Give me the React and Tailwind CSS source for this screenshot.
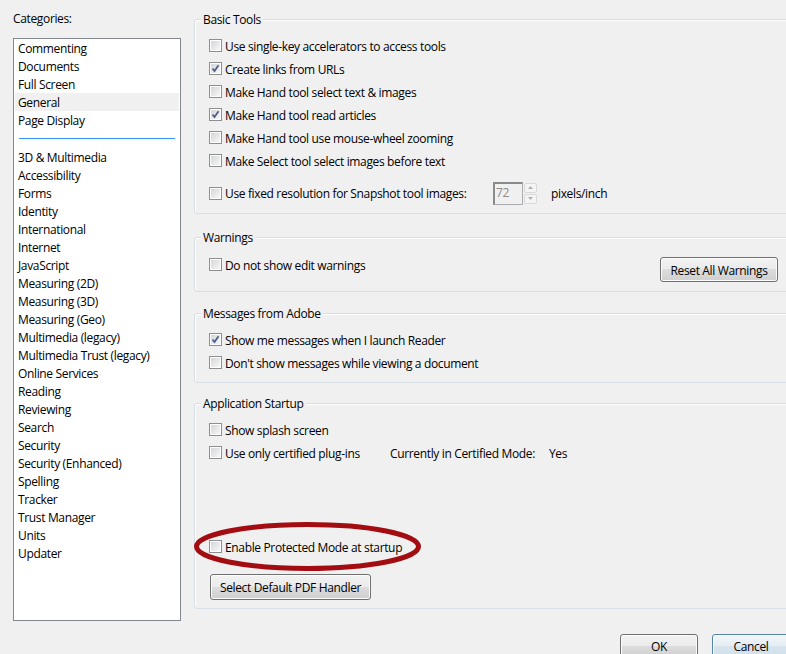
import React from "react";

const categoriesTop = ["Commenting", "Documents", "Full Screen", "General", "Page Display"];
const categoriesBottom = [
  "3D & Multimedia",
  "Accessibility",
  "Forms",
  "Identity",
  "International",
  "Internet",
  "JavaScript",
  "Measuring (2D)",
  "Measuring (3D)",
  "Measuring (Geo)",
  "Multimedia (legacy)",
  "Multimedia Trust (legacy)",
  "Online Services",
  "Reading",
  "Reviewing",
  "Search",
  "Security",
  "Security (Enhanced)",
  "Spelling",
  "Tracker",
  "Trust Manager",
  "Units",
  "Updater",
];

const Checkbox = ({ checked }) => (
  <div className="w-[13px] h-[13px] shrink-0 border border-[#8e8f8f] bg-white p-[1px] relative">
    <div className="w-full h-full bg-gradient-to-br from-[#d4d6d9] to-[#f7f7f7]" />
    {checked && (
      <svg className="absolute left-0 top-0" width="11" height="11" viewBox="0 0 11 11">
        <path d="M2.5 5.5 L4.5 8 L8.5 2.2" fill="none" stroke="#4a5b8c" strokeWidth="1.7" />
      </svg>
    )}
  </div>
);

const Row = ({ checked, children }) => (
  <div className="flex items-center h-[23px]">
    <Checkbox checked={checked} />
    <span className="ml-[3px] whitespace-nowrap relative top-[1px]">{children}</span>
  </div>
);

const Group = ({ title, className, children }) => (
  <div className={"relative border border-[#d5dfe5] rounded-[3px] shadow-[inset_1px_1px_0_#fff] " + className}>
    <span className="absolute left-[6px] top-[-8px] px-[2px] bg-[#f0f0f0] leading-[16px]">{title}</span>
    {children}
  </div>
);

const Button = ({ children, className }) => (
  <div
    className={
      "flex items-center justify-center rounded-[3px] border border-[#707070] bg-[linear-gradient(#f2f2f2_0%,#ebebeb_49%,#dddddd_50%,#cfcfcf_100%)] shadow-[inset_0_0_0_1px_#fcfcfc] " +
      className
    }
  >
    <span className="relative top-[1px]">{children}</span>
  </div>
);

export default function App() {
  return (
    <div
      className="relative w-[786px] h-[654px] overflow-hidden bg-[#f0f0f0] text-[12px] text-black flex"
      style={{ fontFamily: '"Open Sans", "Noto Sans", sans-serif', letterSpacing: "-0.35px" }}
    >
      {/* left: categories */}
      <div className="ml-[13px] w-[168px] shrink-0">
        <div className="pt-[11px] leading-[16px]">Categories:</div>
        <div className="mt-[11px] h-[583px] border border-[#828790] bg-white">
          {categoriesTop.map((c) => (
            <div
              key={c}
              className={"mx-[1px] h-[18px] leading-[18px] pl-[3px] " + (c === "General" ? "bg-[#f0f0f0]" : "")}
            >
              <span className="relative top-[1px]">{c}</span>
            </div>
          ))}
          <div className="h-[19px] pt-[9px]">
            <div className="mx-[5px] h-px bg-[#3399ff]" />
          </div>
          {categoriesBottom.map((c) => (
            <div key={c} className="mx-[1px] h-[18px] leading-[18px] pl-[3px]">
              <span className="relative top-[1px]">{c}</span>
            </div>
          ))}
        </div>
      </div>

      {/* right: preferences */}
      <div className="ml-[13px] w-[596px] shrink-0 pt-[19px]">
        <Group title="Basic Tools" className="h-[195px] pt-[14px] pl-[14px]">
          <Row>Use single-key accelerators to access tools</Row>
          <Row checked>Create links from URLs</Row>
          <Row>Make Hand tool select text &amp; images</Row>
          <Row checked>Make Hand tool read articles</Row>
          <Row>Make Hand tool use mouse-wheel zooming</Row>
          <Row>Make Select tool select images before text</Row>
          <div className="flex items-center h-[24px] mt-[9px]">
            <Checkbox />
            <span className="ml-[3px] w-[268px] whitespace-nowrap relative top-[1px]">
              Use fixed resolution for Snapshot tool images:
            </span>
            <div className="w-[30px] h-[23px] border border-[#abadb3] border-t-[#8a8a8a] border-l-[#8a8a8a] border-l-2 border-t-2 bg-[#f0f0f0] text-[#8a8a8a] pl-[1px] leading-[18px]">
              72
            </div>
            <div className="w-[15px] h-[23px] flex flex-col gap-[1px] p-[1px]">
              <div className="flex-1 border border-[#d9d9d9] rounded-[2px] bg-[#f4f4f4] flex items-center justify-center">
                <svg width="5" height="3" viewBox="0 0 5 3"><path d="M0 3 L2.5 0 L5 3Z" fill="#b0b0b0" /></svg>
              </div>
              <div className="flex-1 border border-[#d9d9d9] rounded-[2px] bg-[#f4f4f4] flex items-center justify-center">
                <svg width="5" height="3" viewBox="0 0 5 3"><path d="M0 0 L2.5 3 L5 0Z" fill="#b0b0b0" /></svg>
              </div>
            </div>
            <span className="ml-[13px] relative top-[1px]">pixels/inch</span>
          </div>
        </Group>

        <Group title="Warnings" className="mt-[23px] h-[55px] pt-[15px] pl-[14px] pr-[11px] flex items-start justify-between">
          <Row>Do not show edit warnings</Row>
          <Button className="mt-[4px] w-[118px] h-[25px]">Reset All Warnings</Button>
        </Group>

        <Group title="Messages from Adobe" className="mt-[21px] h-[70px] pt-[14px] pl-[14px]">
          <Row checked>Show me messages when I launch Reader</Row>
          <Row>Don&apos;t show messages while viewing a document</Row>
        </Group>

        <Group title="Application Startup" className="mt-[20px] h-[206px] pt-[14px] pl-[14px]">
          <Row>Show splash screen</Row>
          <div className="flex items-center h-[23px]">
            <Checkbox />
            <span className="ml-[3px] w-[165px] whitespace-nowrap relative top-[1px]">Use only certified plug-ins</span>
            <span className="w-[159px] whitespace-nowrap relative top-[1px]">Currently in Certified Mode:</span>
            <span className="relative top-[1px]">Yes</span>
          </div>
          <div className="mt-[71px]">
            <Row>Enable Protected Mode at startup</Row>
          </div>
          <Button className="mt-[16px] ml-[1px] w-[161px] h-[26px]">Select Default PDF Handler</Button>
        </Group>

        <div className="mt-[25px] flex">
          <Button className="ml-[426px] w-[80px] h-[24px]">OK</Button>
          <div className="ml-[14px] w-[80px] h-[24px] flex items-center justify-center rounded-[3px] border border-[#5586a3] bg-[linear-gradient(#f1f6f9_0%,#e6eef4_49%,#d8e5ee_50%,#cfdfea_100%)] shadow-[inset_0_0_0_1px_#f8fbfd]">
            <span className="relative top-[1px]">Cancel</span>
          </div>
        </div>
      </div>

      {/* red annotation ellipse */}
      <svg className="absolute left-0 top-0 pointer-events-none" width="786" height="654">
        <ellipse cx="307.5" cy="546.5" rx="111" ry="22" fill="none" stroke="#a30d12" strokeWidth="5" />
      </svg>
    </div>
  );
}
